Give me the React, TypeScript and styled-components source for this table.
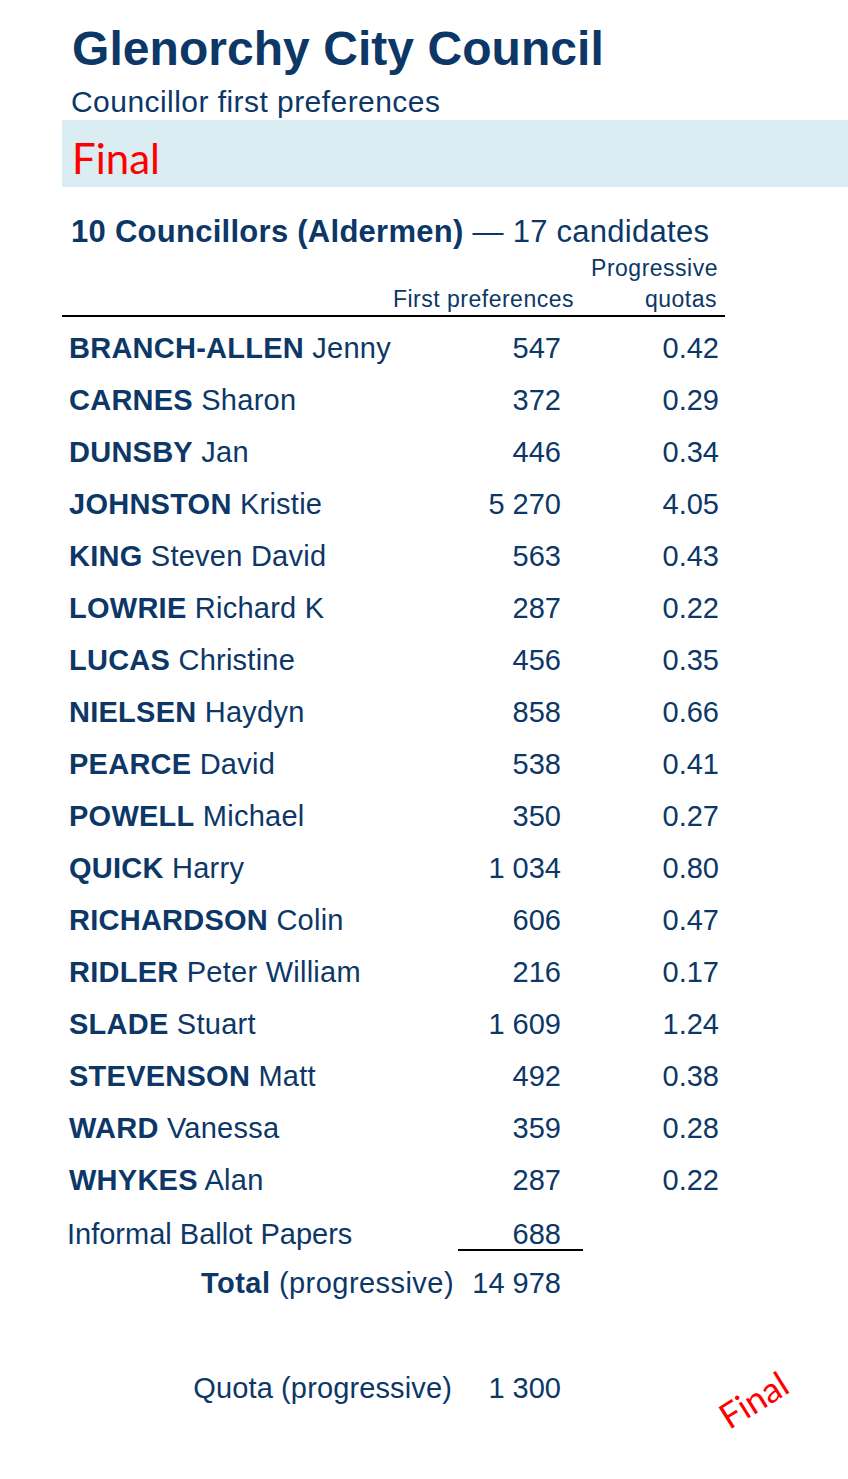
import React from "react";
import styled, { createGlobalStyle } from "styled-components";

const NAVY = "#0c3767";

const Global = createGlobalStyle`
  html, body { margin: 0; padding: 0; background: #ffffff; }
  body { font-family: "Liberation Sans", Arial, sans-serif; color: ${NAVY}; }
`;

const Page = styled.div`
  width: 848px;
  height: 1479px;
  overflow: hidden;
  display: flex;
  flex-direction: column;
`;

const Title = styled.h1`
  margin: 21px 0 0 72px;
  font-size: 48px;
  line-height: 56px;
  font-weight: 700;
  letter-spacing: 0.05px;
`;

const Subtitle = styled.div`
  margin: 7px 0 0 71px;
  font-size: 30px;
  line-height: 36px;
  letter-spacing: 0.45px;
`;

const Band = styled.div`
  margin-left: 62px;
  height: 67px;
  background: #daedf2;
  display: flex;
  align-items: center;
  padding-left: 10px;
`;

const FinalText = styled.span`
  font-family: Lato, "Noto Sans", sans-serif;
  font-weight: 400;
  font-size: 42px;
  color: #ff0000;
  line-height: 1;
  margin-top: 8px;
`;

const Table = styled.div`
  margin-left: 62px;
  width: 663px;
  display: flex;
  flex-direction: column;
`;

const Heading = styled.div`
  margin-top: 25px;
  padding-left: 9px;
  font-size: 31px;
  line-height: 40px;
  letter-spacing: 0.27px;
  white-space: nowrap;
`;

const Head = styled.div`
  border-bottom: 2px solid #000;
  display: grid;
  grid-template-columns: 1fr 100px 158px;
  padding-right: 6px;
  font-size: 23px;
  letter-spacing: 0.5px;
`;

const HeadCell = styled.div<{ $col: number; $row: number; $h: number; $shift?: number }>`
  grid-column: ${(p) => p.$col};
  grid-row: ${(p) => p.$row};
  justify-self: end;
  white-space: nowrap;
  line-height: ${(p) => p.$h}px;
  margin-right: ${(p) => -(p.$shift ?? 0)}px;
`;

const Rows = styled.div`
  padding-top: 5px;
  display: flex;
  flex-direction: column;
`;

const Row = styled.div`
  display: grid;
  grid-template-columns: 1fr 100px 158px;
  padding-right: 6px;
  height: 52px;
  align-items: center;
  font-size: 29px;
  line-height: 52px;
  letter-spacing: 0.25px;
`;

const Name = styled.div<{ $pad?: number }>`
  padding-left: ${(p) => p.$pad ?? 7}px;
  white-space: nowrap;
`;

const Num = styled.div`
  text-align: right;
  white-space: nowrap;
  letter-spacing: 0;
`;

const InformalRow = styled.div`
  margin-top: 13px;
  display: grid;
  grid-template-columns: 1fr 100px 158px;
  padding-right: 6px;
  font-size: 29px;
  line-height: 30px;
  letter-spacing: 0;
`;

const Underlined = styled.div`
  justify-self: end;
  width: 103px;
  margin-right: -22px;
  padding-right: 22px;
  text-align: right;
  border-bottom: 2px solid #000;
`;

const SummaryRow = styled.div<{ $top: number; $labelPad?: number; $ls: number }>`
  margin-top: ${(p) => p.$top}px;
  display: grid;
  grid-template-columns: 392px 107px 1fr;
  font-size: 29px;
  line-height: 30px;
  & > div:first-child {
    padding-right: ${(p) => p.$labelPad ?? 0}px;
    letter-spacing: ${(p) => p.$ls}px;
  }
`;

const Label = styled.div`
  text-align: right;
  white-space: nowrap;
`;

const Stamp = styled.div`
  justify-self: start;
  margin-left: 132px;
  width: 120px;
  text-align: center;
  font-family: Lato, "Noto Sans", sans-serif;
  font-size: 35px;
  color: #ff0000;
  transform: translateY(11px) rotate(-32deg);
`;

type Cand = { sur: string; given: string; votes: string; quota: string };

const candidates: Cand[] = [
  { sur: "BRANCH-ALLEN", given: "Jenny", votes: "547", quota: "0.42" },
  { sur: "CARNES", given: "Sharon", votes: "372", quota: "0.29" },
  { sur: "DUNSBY", given: "Jan", votes: "446", quota: "0.34" },
  { sur: "JOHNSTON", given: "Kristie", votes: "5 270", quota: "4.05" },
  { sur: "KING", given: "Steven David", votes: "563", quota: "0.43" },
  { sur: "LOWRIE", given: "Richard K", votes: "287", quota: "0.22" },
  { sur: "LUCAS", given: "Christine", votes: "456", quota: "0.35" },
  { sur: "NIELSEN", given: "Haydyn", votes: "858", quota: "0.66" },
  { sur: "PEARCE", given: "David", votes: "538", quota: "0.41" },
  { sur: "POWELL", given: "Michael", votes: "350", quota: "0.27" },
  { sur: "QUICK", given: "Harry", votes: "1 034", quota: "0.80" },
  { sur: "RICHARDSON", given: "Colin", votes: "606", quota: "0.47" },
  { sur: "RIDLER", given: "Peter William", votes: "216", quota: "0.17" },
  { sur: "SLADE", given: "Stuart", votes: "1 609", quota: "1.24" },
  { sur: "STEVENSON", given: "Matt", votes: "492", quota: "0.38" },
  { sur: "WARD", given: "Vanessa", votes: "359", quota: "0.28" },
  { sur: "WHYKES", given: "Alan", votes: "287", quota: "0.22" },
];

export default function App() {
  return (
    <>
      <Global />
      <Page>
        <Title>Glenorchy City Council</Title>
        <Subtitle>Councillor first preferences</Subtitle>
        <Band>
          <FinalText>Final</FinalText>
        </Band>
        <Table>
          <Heading>
            <b>10 Councillors (Aldermen)</b> — 17 candidates
          </Heading>
          <Head>
            <HeadCell $col={3} $row={1} $h={32} $shift={-1}>
              Progressive
            </HeadCell>
            <HeadCell $col={2} $row={2} $h={31} $shift={13}>
              First preferences
            </HeadCell>
            <HeadCell $col={3} $row={2} $h={31} $shift={-2}>
              quotas
            </HeadCell>
          </Head>
          <Rows>
            {candidates.map((c) => (
              <Row key={c.sur}>
                <Name>
                  <b>{c.sur}</b> {c.given}
                </Name>
                <Num>{c.votes}</Num>
                <Num>{c.quota}</Num>
              </Row>
            ))}
          </Rows>
          <InformalRow>
            <Name $pad={5}>Informal Ballot Papers</Name>
            <Underlined>688</Underlined>
          </InformalRow>
          <SummaryRow $top={17} $ls={0.45}>
            <Label>
              <b>Total</b> (progressive)
            </Label>
            <Num>14 978</Num>
          </SummaryRow>
          <SummaryRow $top={75} $labelPad={2} $ls={0.13}>
            <Label>Quota (progressive)</Label>
            <Num>1 300</Num>
            <Stamp>Final</Stamp>
          </SummaryRow>
        </Table>
      </Page>
    </>
  );
}
